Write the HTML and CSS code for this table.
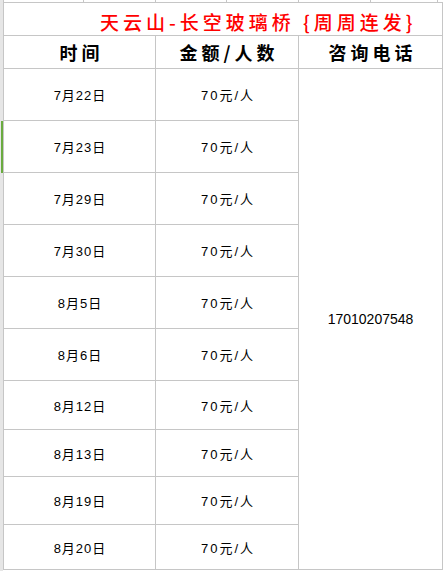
FILE: index.html
```html
<!DOCTYPE html>
<html lang="zh">
<head>
<meta charset="utf-8">
<link rel="stylesheet" href="styles.css">
</head>
<body>
<div class="top">
  <div class="tseg w80"></div>
  <div class="tseg w72"></div>
  <div class="tseg w71"></div>
  <div class="tseg w72"></div>
  <div class="tseg w72"></div>
  <div class="tseg w67"></div>
  <div class="tseg wrest"></div>
</div>
<div class="sheet">
  <div class="sel"></div>
  <div class="cell title">天云山-长空玻璃桥 {周周连发}</div>
  <div class="cell head col-a">时间</div>
  <div class="cell head col-b">金额/人数</div>
  <div class="cell head col-c">咨询电话</div>

  <div class="cell data col-a">7月22日</div>
  <div class="cell data col-b">70元/人</div>
  <div class="cell data col-c phone">17010207548</div>

  <div class="cell data col-a">7月23日</div>
  <div class="cell data col-b">70元/人</div>
  <div class="cell data col-a">7月29日</div>
  <div class="cell data col-b">70元/人</div>
  <div class="cell data col-a">7月30日</div>
  <div class="cell data col-b">70元/人</div>
  <div class="cell data col-a">8月5日</div>
  <div class="cell data col-b">70元/人</div>
  <div class="cell data col-a">8月6日</div>
  <div class="cell data col-b">70元/人</div>
  <div class="cell data col-a">8月12日</div>
  <div class="cell data col-b">70元/人</div>
  <div class="cell data col-a">8月13日</div>
  <div class="cell data col-b">70元/人</div>
  <div class="cell data col-a">8月19日</div>
  <div class="cell data col-b">70元/人</div>
  <div class="cell data col-a">8月20日</div>
  <div class="cell data col-b">70元/人</div>
</div>
</body>
</html>
```

FILE: styles.css
```css
html, body {
  margin: 0;
  padding: 0;
}
body {
  width: 444px;
  height: 571px;
  overflow: hidden;
  background: linear-gradient(to right, #e6e6e6 3px, #ffffff 3px);
  font-family: "Liberation Sans", "Noto Sans CJK SC", sans-serif;
  color: #000;
}
.top {
  display: flex;
  height: 2px;
  padding-left: 3px;
}
.tseg {
  box-sizing: border-box;
  border-left: 1px solid #c6c6c6;
  height: 2px;
  background: #fff;
}
.w80 { width: 80px; }
.w72 { width: 72px; }
.w71 { width: 71px; }
.w67 { width: 67px; }
.wrest { flex: 1; }

.sheet {
  display: grid;
  grid-template-columns: 3px 153px 143px 144px;
  grid-template-rows: 34px 33px 52px 52px 52px 52px 52px 52px 49px 47px 48px 45px;
}
.cell {
  box-sizing: border-box;
  border-right: 1px solid #c6c6c6;
  border-bottom: 1px solid #c6c6c6;
  background: #fff;
  display: flex;
  align-items: center;
  justify-content: center;
  white-space: nowrap;
}
.col-a { grid-column: 2; border-left: 1px solid #c6c6c6; }
.col-b { grid-column: 3; }
.col-c { grid-column: 4; }

.title {
  grid-column: 2 / 5;
  grid-row: 1;
  border-left: 1px solid #c6c6c6;
  border-top: 1px solid #c6c6c6;
  justify-content: flex-start;
  padding-left: 96px;
  padding-top: 4px;
  color: #ff0000;
  font-family: "Noto Sans CJK SC", sans-serif;
  font-size: 19px;
  font-weight: 500;
  letter-spacing: 4px;
}
.head {
  grid-row: 2;
  font-family: "Noto Sans CJK SC", sans-serif;
  font-size: 18px;
  font-weight: 700;
  letter-spacing: 4px;
  padding-left: 4px;
}
.data {
  font-size: 13px;
  letter-spacing: 1px;
  padding-left: 1px;
  padding-top: 0;
}
.data.col-b {
  letter-spacing: 2px;
  padding-left: 2px;
}
.data.phone {
  grid-row: 3 / span 10;
  font-size: 14px;
  letter-spacing: 0;
  padding-left: 0;
  padding-top: 0;
}
.sel {
  grid-column: 1;
  grid-row: 4;
  justify-self: end;
  width: 2px;
  background: #6aab3f;
}
```
